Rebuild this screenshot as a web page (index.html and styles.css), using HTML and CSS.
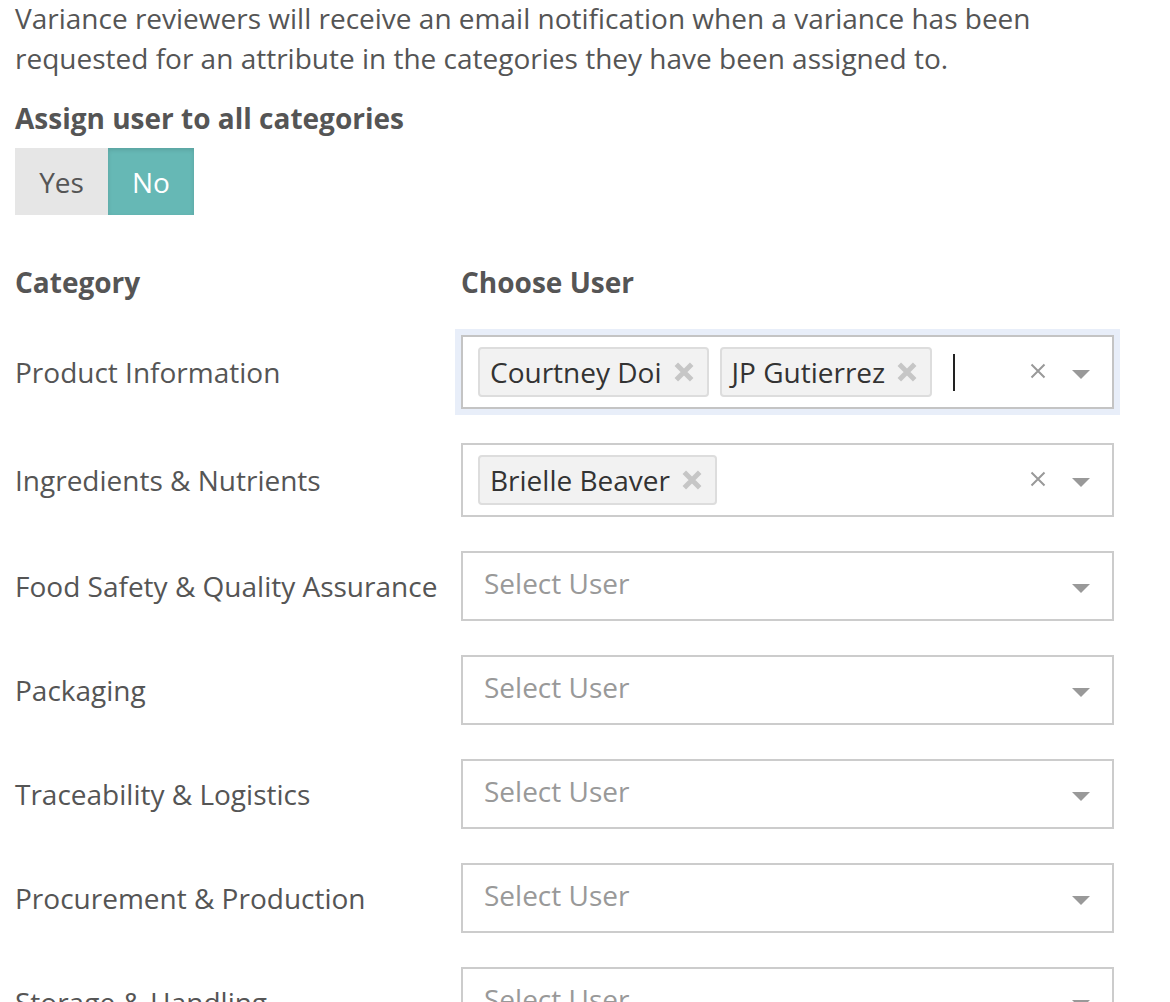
FILE: index.html
```html
<!DOCTYPE html>
<html lang="en">
<head>
  <meta charset="UTF-8" />
  <meta name="viewport" content="width=device-width, initial-scale=1.0" />
  <title>Variance Reviewers</title>
  <link rel="stylesheet" href="styles.css">
</head>
<body>

  <p class="intro">Variance reviewers will receive an email notification when a variance has been requested for an attribute in the categories they have been assigned to.</p>

  <div class="field-label">Assign user to all categories</div>
  <div class="toggle">
    <button class="toggle-btn">Yes</button>
    <button class="toggle-btn active">No</button>
  </div>

  <div class="grid">
    <div class="col-head">Category</div>
    <div class="col-head">Choose User</div>

    <div class="cat">Product Information</div>
    <div class="select multi focused">
      <div class="values">
        <span class="tag">Courtney Doi
          <svg class="tag-x" viewBox="0 0 20 20"><path d="M3 3L17 17M17 3L3 17" /></svg>
        </span>
        <span class="tag">JP Gutierrez
          <svg class="tag-x" viewBox="0 0 20 20"><path d="M3 3L17 17M17 3L3 17" /></svg>
        </span>
        <span class="caret"></span>
      </div>
      <svg class="clear" viewBox="0 0 16 16"><path d="M1.5 1.5L14.5 14.5M14.5 1.5L1.5 14.5" /></svg>
      <span class="arrow"></span>
    </div>

    <div class="cat">Ingredients &amp; Nutrients</div>
    <div class="select multi">
      <div class="values">
        <span class="tag">Brielle Beaver
          <svg class="tag-x" viewBox="0 0 20 20"><path d="M3 3L17 17M17 3L3 17" /></svg>
        </span>
      </div>
      <svg class="clear" viewBox="0 0 16 16"><path d="M1.5 1.5L14.5 14.5M14.5 1.5L1.5 14.5" /></svg>
      <span class="arrow"></span>
    </div>

    <div class="cat">Food Safety &amp; Quality Assurance</div>
    <div class="select">
      <div class="values placeholder">Select User</div>
      <span class="arrow"></span>
    </div>

    <div class="cat">Packaging</div>
    <div class="select">
      <div class="values placeholder">Select User</div>
      <span class="arrow"></span>
    </div>

    <div class="cat">Traceability &amp; Logistics</div>
    <div class="select">
      <div class="values placeholder">Select User</div>
      <span class="arrow"></span>
    </div>

    <div class="cat">Procurement &amp; Production</div>
    <div class="select">
      <div class="values placeholder">Select User</div>
      <span class="arrow"></span>
    </div>

    <div class="cat">Storage &amp; Handling</div>
    <div class="select">
      <div class="values placeholder">Select User</div>
      <span class="arrow"></span>
    </div>
  </div>

</body>
</html>
```

FILE: styles.css
```css
* {
  box-sizing: border-box;
}

html, body {
  margin: 0;
  padding: 0;
  background: #fff;
  font-family: "Open Sans", sans-serif;
  color: #555;
}

body {
  padding: 0 15px;
  font-size: 28px;
}

.intro {
  margin: -2px 0 0;
  max-width: 1100px;
  line-height: 40px;
}

.field-label {
  font-weight: bold;
  margin-top: 20px;
  line-height: 40px;
}

.toggle {
  display: flex;
  margin-top: 10px;
}

.toggle-btn {
  font-family: inherit;
  font-size: 28px;
  height: 67px;
  border: none;
  padding: 0;
  background: #e6e6e6;
  color: #555;
}

.toggle-btn:first-child {
  width: 93px;
}

.toggle-btn.active {
  width: 86px;
  background: #66b8b5;
  color: #fff;
  box-shadow: inset 0 2px 4px rgba(0, 0, 0, 0.12);
}

.grid {
  display: grid;
  grid-template-columns: 446px 653px;
  align-items: center;
  row-gap: 34px;
  margin-top: 47px;
}

.col-head {
  font-weight: bold;
  line-height: 40px;
  margin-bottom: -1px;
}

.cat {
  line-height: 40px;
}

.select {
  display: flex;
  align-items: center;
  height: 70px;
  border: 2px solid #ccc;
  padding: 0 22px 0 21px;
  background: #fff;
}

.select.multi {
  height: 74px;
  padding-left: 15px;
}

.select.focused {
  border-color: #c4c4c4;
  box-shadow: 0 0 0 6px #e8eef9;
}

.values {
  flex: 1;
  display: flex;
  align-items: center;
  gap: 11px;
}

.placeholder {
  color: #999;
  margin-top: -6px;
}

.tag {
  display: inline-flex;
  align-items: center;
  height: 50px;
  padding: 0 12px 0 10px;
  background: #f2f2f2;
  border: 2px solid #ddd;
  border-radius: 4px;
  color: #333;
  white-space: nowrap;
}

.tag-x {
  width: 22px;
  height: 22px;
  margin-left: 11px;
  fill: none;
  stroke: #c6c6c6;
  stroke-width: 4.5;
}

.caret {
  width: 2px;
  height: 37px;
  background: #222;
  margin-left: 10px;
}

.clear {
  width: 16px;
  height: 16px;
  margin-right: 26px;
  margin-top: -2px;
  fill: none;
  stroke: #999;
  stroke-width: 2;
}

.arrow {
  width: 0;
  height: 0;
  border-left: 9px solid transparent;
  border-right: 9px solid transparent;
  border-top: 9px solid #999;
  margin-top: 4px;
}
```
